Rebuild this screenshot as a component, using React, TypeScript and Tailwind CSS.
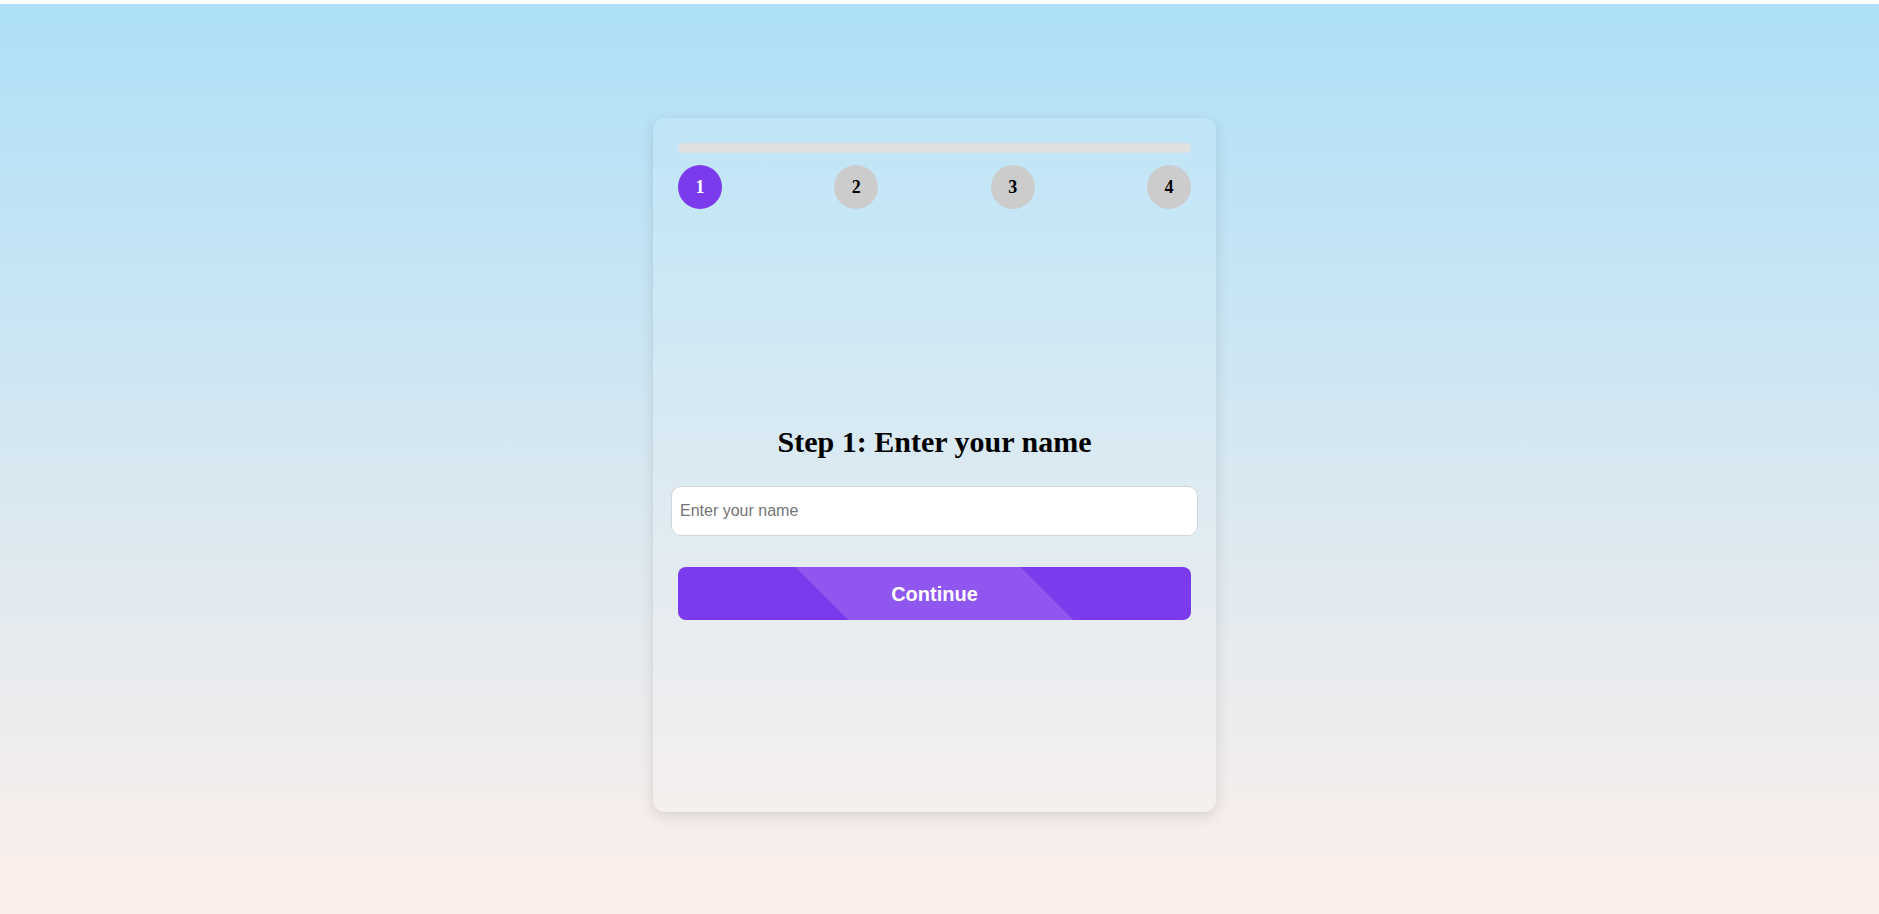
import { useState } from 'react';

const STEPS = [1, 2, 3, 4];

export default function App() {
  const [step] = useState(1);
  const [name, setName] = useState('');

  return (
    <div className="min-h-screen bg-white pt-1">
      <div className="h-[910px] bg-gradient-to-b from-[#ade0f8] to-[#fdefea] flex justify-center pr-[10px]">
        <div className="mt-[114px] w-[563px] h-[694px] rounded-xl bg-white/10 shadow-[0_4px_14px_rgba(0,0,0,0.12)] p-[25px] flex flex-col">
          <div className="h-[10px] w-full rounded-full bg-[#e0e0e0]" />
          <div className="mt-3 flex justify-between">
            {STEPS.map((s) => (
              <div
                key={s}
                className={`w-11 h-11 rounded-full flex items-center justify-center font-bold text-[18px] font-['Liberation_Serif',serif] ${
                  s === step ? 'bg-[#7c3aed] text-white' : 'bg-[#cccccc] text-black'
                }`}
              >
                {s}
              </div>
            ))}
          </div>

          <h2 className="mt-[216px] text-center font-bold text-[30px] leading-[34px] text-black font-['Liberation_Serif',serif]">
            Step {step}: Enter your name
          </h2>

          <input
            type="text"
            value={name}
            onChange={(e) => setName(e.target.value)}
            placeholder="Enter your name"
            className="mt-[27px] -mx-[7px] w-[527px] h-[50px] px-2 bg-white border border-[#d1d5db] rounded-[10px] text-[16px] text-black placeholder-[#757575] font-['Liberation_Sans',Arial,sans-serif] focus:outline-none"
          />

          <button
            type="button"
            className="relative overflow-hidden mt-[31px] h-[53px] w-full rounded-lg bg-[#7c3aed] text-white font-bold text-[20px] font-['Liberation_Sans',Arial,sans-serif]"
          >
            <span className="absolute top-0 bottom-0 left-[144px] w-[225px] bg-white/15 [transform:skewX(45deg)]" />
            <span className="relative">Continue</span>
          </button>
        </div>
      </div>
    </div>
  );
}
